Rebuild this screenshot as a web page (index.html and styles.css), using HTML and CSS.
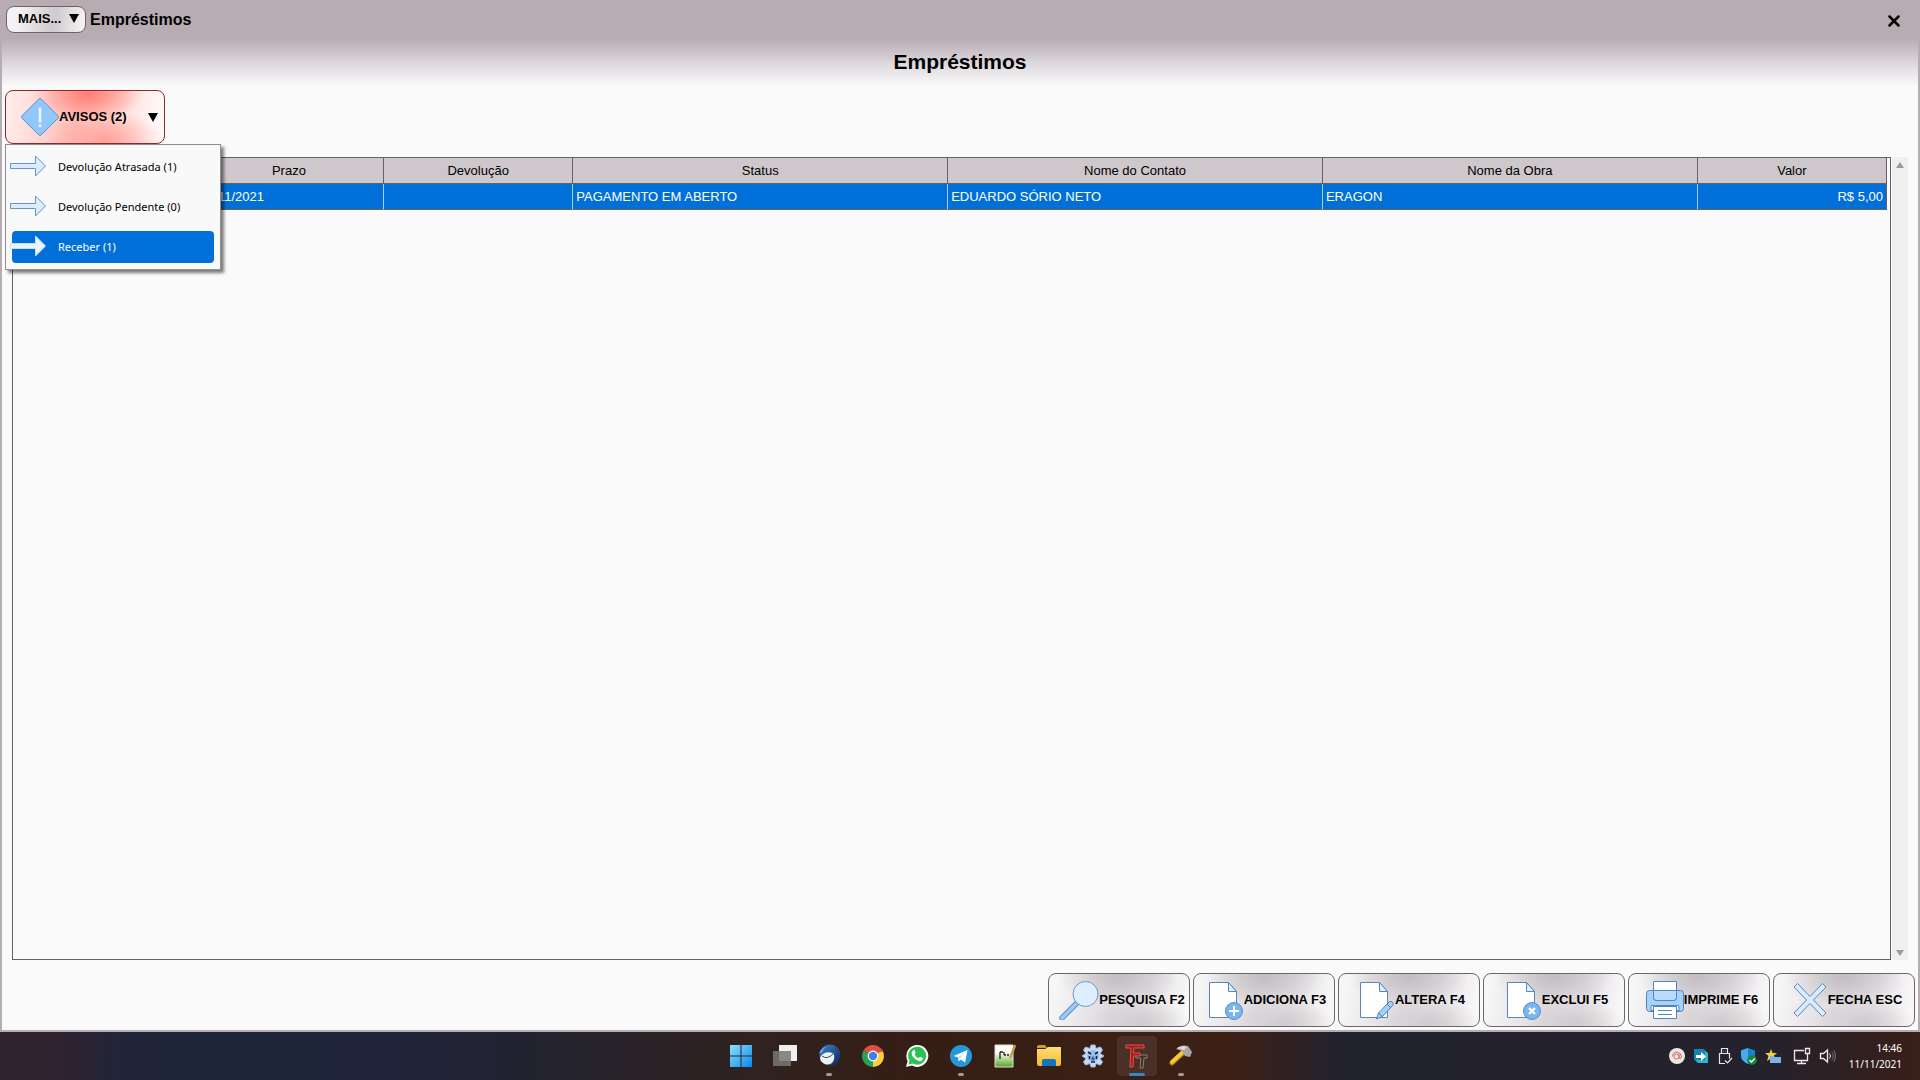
FILE: index.html
```html
<!DOCTYPE html>
<html lang="pt-BR">
<head>
<meta charset="utf-8">
<title>Empréstimos</title>
<link rel="stylesheet" href="styles.css">
</head>
<body>
<svg class="defs" aria-hidden="true">
  <defs>
    <linearGradient id="win" x1="0" y1="0" x2="1" y2="1"><stop offset="0" stop-color="#8be2fb"/><stop offset="1" stop-color="#0a86ee"/></linearGradient>
    <linearGradient id="folder" x1="0" y1="0" x2="0" y2="1"><stop offset="0" stop-color="#ffdf72"/><stop offset="1" stop-color="#f5b92e"/></linearGradient>
    <linearGradient id="note" x1="0" y1="0" x2="0" y2="1"><stop offset="0.35" stop-color="#fdfdf5"/><stop offset="1" stop-color="#57a520"/></linearGradient>
    <linearGradient id="bird" x1="0" y1="0" x2="1" y2="1"><stop offset="0" stop-color="#3f86cc"/><stop offset="1" stop-color="#0c2455"/></linearGradient>
    <symbol id="page" viewBox="0 0 36 40"><path d="M1.5 2.5h19l8 9v26h-27z" fill="#fff" stroke="#5b86b4"/><path d="M20.500 2.500v9h8z" fill="#dcedfd" stroke="#5b86b4"/></symbol>
    <symbol id="arrow" viewBox="0 0 36 22"><path d="M.5 8.500h25v-7.500l10 10-10 10v-7.500h-25z"/></symbol>
  </defs>
</svg>

<main class="window">
  <header class="titlebar">
    <button class="more" type="button"><span>MAIS...</span><span class="caret"></span></button>
    <span class="window-title">Empréstimos</span>
    <button class="close" type="button" aria-label="Fechar"><svg width="12" height="12" viewBox="0 0 12 12"><path d="M1.500 1.500l9 9M10.500 1.500l-9 9" stroke="#000" stroke-width="2.500" stroke-linecap="round"/></svg></button>
  </header>
  <div class="banner"><h1>Empréstimos</h1></div>

  <div class="toolbar">
    <button class="alerts" type="button" aria-expanded="true">
      <svg width="38" height="38" viewBox="0 0 38 38"><path d="M17.600 1.200Q19 0 20.400 1.200L36.800 17.600Q38 19 36.800 20.400L20.400 36.800Q19 38 17.600 36.800L1.200 20.400Q0 19 1.200 17.600z" fill="#92c7fb" stroke="#5a8fc8"/><path d="M19 9.500v15M19 26.500v2.500" stroke="#eaf5ff" stroke-width="2.600"/></svg>
      <span>AVISOS (2)</span><span class="caret"></span>
    </button>
    <div class="menu" role="menu">
      <button type="button" role="menuitem"><svg width="36" height="22"><use href="#arrow"/></svg>Devolução Atrasada (1)</button>
      <button type="button" role="menuitem"><svg width="36" height="22"><use href="#arrow"/></svg>Devolução Pendente (0)</button>
      <button type="button" role="menuitem" class="selected"><svg width="36" height="22"><use href="#arrow"/></svg>Receber (1)</button>
    </div>
  </div>

  <section class="grid-area">
    <div class="grid">
      <table>
        <colgroup><col><col class="c-date"><col class="c-date"><col class="c-wide"><col class="c-wide"><col class="c-wide"><col class="c-date"></colgroup>
        <thead><tr><th></th><th>Prazo</th><th>Devolução</th><th>Status</th><th>Nome do Contato</th><th>Nome da Obra</th><th>Valor</th></tr></thead>
        <tbody><tr><td class="date"></td><td class="date">11/11/2021</td><td class="date"></td><td>PAGAMENTO EM ABERTO</td><td>EDUARDO SÓRIO NETO</td><td>ERAGON</td><td class="num">R$ 5,00</td></tr></tbody>
      </table>
    </div>
    <div class="scroll" aria-hidden="true"><span class="up"></span><span class="down"></span></div>
  </section>

  <footer class="actions">
    <button type="button"><svg width="40" height="40" viewBox="0 0 40 40"><path d="M17 24L3 38" stroke="#5b8fc6" stroke-width="5.500" stroke-linecap="round"/><path d="M17 24L3 38" stroke="#9ccaf5" stroke-width="3.500" stroke-linecap="round"/><circle cx="26.500" cy="14" r="12.500" fill="#deeefe" stroke="#6a9ac8"/></svg><span>PESQUISA F2</span></button>
    <button type="button"><svg width="36" height="40" viewBox="0 0 36 40"><use href="#page"/><circle cx="26" cy="31" r="8.500" fill="#79b5ee" stroke="#5a8fc4"/><path d="M26 26v10M21 31h10" stroke="#fff" stroke-width="2"/></svg><span>ADICIONA F3</span></button>
    <button type="button"><svg width="36" height="40" viewBox="0 0 36 40"><use href="#page"/><path d="M17.500 39l2-6 11-11.500q3-1 4 3l-11 12z" fill="#a8d0f6" stroke="#4f80b4"/><path d="M19.500 33l4 3.500M28 24l4 4" stroke="#4f80b4"/></svg><span>ALTERA F4</span></button>
    <button type="button"><svg width="36" height="40" viewBox="0 0 36 40"><use href="#page"/><circle cx="26" cy="31" r="8.500" fill="#79b5ee" stroke="#5a8fc4"/><path d="M23 28l6 6M29 28l-6 6" stroke="#fff" stroke-width="2.200"/></svg><span>EXCLUI F5</span></button>
    <button type="button"><svg width="38" height="40" viewBox="0 0 38 40"><rect x=".5" y="10.500" width="37" height="21" rx="3" fill="#a5d1fb" stroke="#5385ba"/><path d="M7.500 1.500h23v16q0 3-3 3h-17q-3 0-3-3z" fill="#fff" stroke="#5385ba"/><path d="M7.500 10.500h23v7q0 3-3 3h-17q-3 0-3-3z" fill="#b9dcfc" stroke="#5385ba"/><path d="M5 26.500q0-1 1-1h26q1 0 1 1v4H5z" fill="#e9f4ff" stroke="#5385ba"/><path d="M7.500 26.500h23v12h-23z" fill="#fff" stroke="#5385ba"/><path d="M12 30.500h14M12 34.500h14" stroke="#5385ba"/></svg><span>IMPRIME F6</span></button>
    <button type="button"><svg width="36" height="40" viewBox="0 0 36 40"><path d="M2 7L5.500 3.500 18 16.500 30.500 3.500 34 7 21.500 20 34 33 30.500 36.500 18 23.500 5.500 36.500 2 33 14.500 20z" fill="#d8ecff" stroke="#5b86b0" stroke-linejoin="round"/></svg><span>FECHA ESC</span></button>
  </footer>
</main>

<nav class="taskbar" aria-label="Barra de tarefas">
  <div class="apps">
    <button type="button" aria-label="Iniciar"><svg width="24" height="24" viewBox="0 0 24 24"><path d="M1 1h10.500v10.500H1zM12.500 1H23v10.500H12.500zM1 12.500h10.500V23H1zM12.500 12.500H23V23H12.500z" fill="url(#win)"/></svg></button>
    <button type="button" aria-label="Visão de tarefas"><svg width="26" height="24" viewBox="0 0 26 24"><path d="M7 1h18v16H7z" fill="#f1eeee"/><path d="M1 7h18v15H1z" fill="#777574" opacity=".85"/></svg></button>
    <button type="button" class="running" aria-label="Correio"><svg width="24" height="24" viewBox="0 0 24 24"><circle cx="13" cy="11" r="10.500" fill="url(#bird)"/><path d="M3 14q1-4 6-5.500 6-1 8 2 1 5-2 8.500-5 3-9 0-3-2-3-5z" fill="#eef0f2"/><path d="M5 12q5 4 11-2" fill="none" stroke="#394b68"/><path d="M2 10q1-6 8-7.500-4 2-4 5z" fill="#6aa6dc"/></svg></button>
    <button type="button" aria-label="Chrome"><svg width="24" height="24" viewBox="0 0 24 24"><path d="M12 12L2.500 6.500a11 11 0 0 1 19 0z" fill="#dd4f41"/><path d="M12 12l9.500-5.500A11 11 0 0 1 12 23z" fill="#fccd3c"/><path d="M12 12v11A11 11 0 0 1 2.500 6.500z" fill="#29a352"/><path d="M12 7h9.800" stroke="#dd4f41" stroke-width="2"/><circle cx="12" cy="12" r="5.400" fill="#fff"/><circle cx="12" cy="12" r="4.200" fill="#427fe8"/></svg></button>
    <button type="button" aria-label="WhatsApp"><svg width="24" height="24" viewBox="0 0 24 24"><path d="M1 23l1.600-6A11 11 0 1 1 7 21.500z" fill="#fff"/><path d="M3.500 20.500l1-4A9 9 0 1 1 7.800 19.600z" fill="#2bc154"/><path d="M8 6.500q1.500-1 2 .5l.7 2-1.200 1.500q1.300 2.500 4 3.700l1.500-1.400 2.700 1.300q.5 1.500-1.200 2.700-2 1-5-.7-4-2.300-4.800-6-.2-2.200 1.300-3.600z" fill="#fff"/></svg></button>
    <button type="button" class="running" aria-label="Telegram"><svg width="24" height="24" viewBox="0 0 24 24"><circle cx="12" cy="12" r="11" fill="#2499d6"/><path d="M4.500 12l14-6-2.400 12.500-4.300-3-2.200 2-.5-4z" fill="#fff"/><path d="M9.200 13.500l6.500-5-5 6z" fill="#b9d9ec"/></svg></button>
    <button type="button" aria-label="Editor"><svg width="24" height="24" viewBox="0 0 24 24"><path d="M2 1h18v22H2z" fill="url(#note)" stroke="#dbe4cf"/><path d="M7 8v7M7 8h3M11 8v3M11 11h2M14 11h2" stroke="#222" fill="none" stroke-width="1.300"/><path d="M22 1l-4 11-1 2" stroke="#c69a53" stroke-width="2.500" fill="none"/></svg></button>
    <button type="button" aria-label="Explorador de arquivos"><svg width="26" height="24" viewBox="0 0 26 24"><path d="M1 3q0-2 2-2h6l2 3H1z" fill="#d59b23"/><path d="M1 5h8l3-2h13v17q0 2-2 2H3q-2 0-2-2z" fill="url(#folder)"/><path d="M6 22v-5q0-2 2-2h10q2 0 2 2v5z" fill="#1675be"/></svg></button>
    <button type="button" aria-label="Configurações"><svg width="24" height="24" viewBox="0 0 24 24"><path d="M10 1h4l1 3.500 4.500-1.500 2 3-2.500 3.500 4 2.500-4 2.500 2.500 3.500-2 3-4.500-1.500-1 3.500h-4l-1-3.500-4.500 1.500-2-3 2.500-3.500-4-2.500 4-2.500-2.500-3.500 2-3 4.500 1.500z" fill="#c5daf5" stroke="#9db8e0"/><circle cx="12" cy="12" r="6" fill="#9bbce8"/><path d="M7 8l3 2M17 8l-3 2M8.500 12v3M15.500 12v3M10 18h4" stroke="#14233f" stroke-width="1.600"/><path d="M10 15l2-3 2 3-2 2z" fill="#2f5fae"/></svg></button>
    <button type="button" class="active" aria-label="Empréstimos"><svg width="24" height="26" viewBox="0 0 24 26"><path d="M11 12h11v3h-3l-1 10h-3l1-10h-5z" fill="#40302a" stroke="#8a7f79"/><path d="M1 2h18v3H9l-.5 5H15v3H8.500L8 24H5L6 5H1z" fill="#a01f21" stroke="#ef4b46"/></svg></button>
    <button type="button" class="running" aria-label="Martelo"><svg width="24" height="24" viewBox="0 0 24 24"><path d="M15 8L3 19" stroke="#b47a12" stroke-width="5" stroke-linecap="round"/><path d="M15 7L3 18" stroke="#f2c63d" stroke-width="4" stroke-linecap="round"/><path d="M7 5q5-5 12-3l4 6-2 5-5-1-3-5z" fill="#a5a5a4"/><path d="M8 4q5-3 10-1l-3 3z" fill="#dedddb"/></svg></button>
  </div>
  <div class="tray">
    <svg width="16" height="16" viewBox="0 0 16 16"><circle cx="8" cy="8" r="8" fill="#efe6e5"/><circle cx="7.500" cy="8.500" r="2.500" fill="none" stroke="#c4705f"/><path d="M10 6v4q1.500 2 2.500-1-.3-4.500-4.500-5-4 0-4.500 4.500" fill="none" stroke="#c4705f"/></svg>
    <svg width="16" height="16" viewBox="0 0 16 16"><path d="M1 1h9l5 4v10H5l-4-4z" fill="#2bb6d8"/><path d="M1 1h9l2 2v9H1z" fill="#1684ae"/><path d="M3 7h5V4l5 4.500L8 13v-3H3z" fill="#fff"/></svg>
    <svg width="16" height="18" viewBox="0 0 16 18"><path d="M4.500 6.500v-5h6v5M8 16.500H2.500v-10h10v5M6 4h.5M8.500 4H9M8 13.500l2.500 2.500 4.500-5" fill="none" stroke="#e9e6e8" stroke-width="1.200"/></svg>
    <svg width="16" height="17" viewBox="0 0 16 17"><path d="M7 0l7 2.500v5Q14 13 7 16 0 13 0 7.500v-5z" fill="#1b83cb"/><path d="M7 0v16Q0 13 0 7.500v-5z" fill="#46aceb"/><circle cx="11" cy="12" r="4.800" fill="#16863c"/><path d="M8.500 12l2 2 3.200-3.500" fill="none" stroke="#fff" stroke-width="1.300"/></svg>
    <svg width="16" height="16" viewBox="0 0 16 16"><path d="M6 1l1.600 4H12L8.500 8 10 13 6 10.500 2 13l1.500-5L0 5h4.500z" fill="#f5cb4c"/><path d="M5 8h4l1 1h6v6H5z" fill="#78b5ed"/></svg>
    <svg class="net" width="18" height="18" viewBox="0 0 18 18"><path d="M11 3.500H1.500v10h13V9M4 16.500h9M8.500 13.500v3M12.500 1.500h4v5h-4zM14.500 6.500v3" fill="none" stroke="#eee9eb" stroke-width="1.300"/></svg>
    <svg width="18" height="16" viewBox="0 0 18 16"><path d="M1.500 5.500h3l4-3.500v12l-4-3.500h-3z" fill="none" stroke="#eee9eb" stroke-width="1.300"/><path d="M10.500 5.500q2 2.500 0 5" fill="none" stroke="#eee9eb"/><path d="M12.500 3.500q3.500 4.500 0 9M14.500 2q4 6 0 12" fill="none" stroke="#77706f"/></svg>
    <time class="clock" datetime="2021-11-11T14:46"><span>14:46</span><span>11/11/2021</span></time>
  </div>
</nav>
</body>
</html>
```
FILE: styles.css
```css
* { box-sizing: border-box; }
body {
  margin: 0;
  min-height: 100vh;
  display: flex;
  flex-direction: column;
  background: #fafafa;
  color: #000;
  font-family: "Liberation Sans", Arial, sans-serif;
  font-size: 13px;
}
button { font: inherit; color: inherit; padding: 0; border: 0; background: none; }
svg { display: block; flex: none; }
.defs { position: absolute; width: 0; height: 0; }

.window {
  flex: 1;
  display: flex;
  flex-direction: column;
  border: 2px solid #b8acb3;
  border-top: 0;
}
.titlebar {
  display: flex;
  align-items: center;
  height: 39px;
  padding: 0 18px 0 4px;
  background: #b8acb3;
}
.more {
  display: flex;
  align-items: center;
  justify-content: space-between;
  width: 80px;
  height: 27px;
  padding: 0 6px 2px 11px;
  border: 1px solid #6c666a;
  border-radius: 8px;
  background: linear-gradient(100deg, #f4f2f4 15%, #cfc9cd 60%, #f2f0f2 95%);
  font-size: 13px;
  font-weight: bold;
}
.caret {
  border: 5px solid transparent;
  border-top: 9px solid #000;
  border-bottom: 0;
}
.window-title { margin-left: 4px; font-size: 16px; font-weight: bold; }
.close { margin-left: auto; padding: 2px 0 0; }
.banner {
  height: 47px;
  background: linear-gradient(#b8acb3, #dbd7dc 50%, #fafafa);
  text-align: center;
}
.banner h1 { margin: 0; font-size: 21px; line-height: 46px; }

.toolbar { position: relative; height: 71px; padding: 4px 3px; }
.alerts {
  display: flex;
  align-items: center;
  width: 160px;
  height: 54px;
  padding: 0 6px 0 15px;
  border: 1px solid #91262b;
  border-radius: 8px;
  background:
    radial-gradient(ellipse 55px 28px at 52% 6%, #ff7f75, #ff7f7500),
    radial-gradient(ellipse 60px 30px at 62% 95%, #ffa299, #ffa29900),
    linear-gradient(100deg, #fff0ef, #ffc0ba 45%, #ffd5d1 65%, #fff7f6 92%);
  font-size: 13px;
  font-weight: bold;
}
.alerts span:not(.caret), .actions span { padding-bottom: 2px; }
.alerts .caret { margin-left: auto; }
.menu {
  position: absolute;
  top: 58px;
  left: 3px;
  z-index: 2;
  width: 216px;
  padding: 6px;
  border: 1px solid #8f8f8f;
  background: #f9f9f9;
  box-shadow: 3px 3px 3px #00000080;
  font-family: "Noto Sans", sans-serif;
  font-size: 11px;
}
.menu button {
  display: flex;
  align-items: center;
  gap: 12px;
  width: 202px;
  height: 32px;
  margin-bottom: 8px;
  padding-bottom: 2px;
  border-radius: 4px;
}
.menu button:last-child { margin-bottom: 0; }
.menu svg { margin-left: -2px; fill: #d9edff; stroke: #6b93bc; }
.menu .selected { background: #0070d8; color: #fff; }
.menu .selected svg { fill: #e6f5ff; stroke: #c4e0f8; }

.grid-area { flex: 1; display: flex; padding: 0 10px; gap: 1px; }
.grid { flex: 1; padding-right: 3px; border: 1px solid #646265; }
table {
  width: 100%;
  border-collapse: separate;
  border-spacing: 0;
  table-layout: fixed;
}
.c-date { width: 10.1%; }
.c-wide { width: 20%; }
th {
  height: 26px;
  padding: 0;
  border-right: 1px solid #646265;
  border-bottom: 1px solid #646265;
  background: #cec7cc;
  font-weight: normal;
}
td {
  height: 26px;
  padding: 0 3px;
  border-right: 1px solid #a9cdf0;
  border-bottom: 1px solid #646265;
  background: #0070d8;
  color: #fff;
}
td:last-child { border-right-color: #646265; }
.date { padding-left: 6px; }
.num { text-align: right; }
.scroll {
  display: flex;
  flex-direction: column;
  justify-content: space-between;
  align-items: center;
  width: 16px;
  padding: 5px 0 4px;
  background: #f0f0f0;
}
.up, .down { border: 4px solid transparent; }
.up { border-bottom: 6px solid #9c9c9c; border-top: 0; }
.down { border-top: 6px solid #9c9c9c; border-bottom: 0; }

.actions {
  display: flex;
  justify-content: flex-end;
  gap: 3px;
  padding: 13px 3px 3px;
}
.actions button {
  display: flex;
  align-items: center;
  justify-content: center;
  width: 142px;
  height: 54px;
  padding-left: 6px;
  border: 1px solid #6c666a;
  border-radius: 8px;
  background:
    radial-gradient(ellipse 60px 30px at 50% 5%, #c3bdc2, #c3bdc200),
    radial-gradient(ellipse 50px 24px at 65% 95%, #cfcacd, #cfcacd00),
    linear-gradient(100deg, #f7f6f7 5%, #dedade 45%, #e4e1e4 70%, #f8f7f8 95%);
  font-size: 13px;
  font-weight: bold;
  white-space: nowrap;
}

.taskbar {
  display: grid;
  grid-template-columns: 1fr auto 1fr;
  align-items: center;
  height: 48px;
  padding-left: 2px;
  background: linear-gradient(90deg, #30222e, #302230 3%, #222438 6%, #1c2638 11%, #20243a 20%, #222330 27%, #30221f 40%, #351e14 48%, #3d2015 64%, #22222f 70%, #24222c 92%, #391f18);
}
.apps { grid-column: 2; display: flex; gap: 4px; }
.apps button {
  position: relative;
  display: flex;
  align-items: center;
  justify-content: center;
  width: 40px;
  height: 40px;
  border-radius: 4px;
}
.running::after, .active::after {
  content: "";
  position: absolute;
  bottom: 0;
  width: 6px;
  height: 3px;
  border-radius: 2px;
  background: #a39b98;
}
.apps .active { background: #4a3027; }
.active::after { width: 16px; background: #3487c8; }
.tray {
  display: flex;
  align-items: center;
  justify-content: flex-end;
  gap: 8px;
  padding-right: 18px;
  color: #fff;
}
.net { margin-left: 4px; }
.clock {
  display: flex;
  flex-direction: column;
  align-items: flex-end;
  margin-left: 4px;
  font: 10px/16px "Noto Sans", sans-serif;
}
```
